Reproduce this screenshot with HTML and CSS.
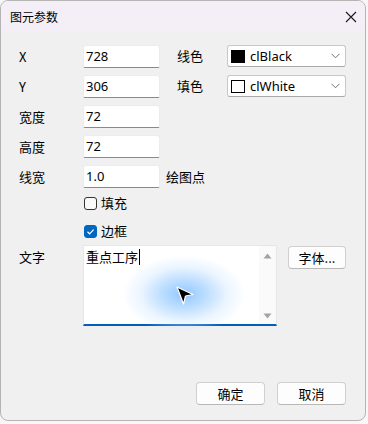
FILE: index.html
```html
<!DOCTYPE html>
<html lang="zh">
<head>
<meta charset="utf-8">
<title>图元参数</title>
<link rel="stylesheet" href="styles.css">
</head>
<body>
<div class="window">
  <div class="titlebar">
    <span class="title">图元参数</span>
    <svg class="close" width="12" height="12" viewBox="0 0 12 12"><path d="M1 1 L11 11 M11 1 L1 11" stroke="#1a1a1a" stroke-width="1.1" fill="none"/></svg>
  </div>
  <div class="content">
    <div class="row">
      <span class="lbl">X</span>
      <div class="input">728</div>
      <span class="lbl2">线色</span>
      <div class="combo">
        <span class="swatch black"></span><span class="ctext">clBlack</span>
        <svg class="chev" width="9" height="6" viewBox="0 0 9 6"><path d="M0.5 0.8 L4.5 4.8 L8.5 0.8" stroke="#707070" stroke-width="1" fill="none"/></svg>
      </div>
    </div>
    <div class="row">
      <span class="lbl">Y</span>
      <div class="input">306</div>
      <span class="lbl2">填色</span>
      <div class="combo">
        <span class="swatch white"></span><span class="ctext">clWhite</span>
        <svg class="chev" width="9" height="6" viewBox="0 0 9 6"><path d="M0.5 0.8 L4.5 4.8 L8.5 0.8" stroke="#707070" stroke-width="1" fill="none"/></svg>
      </div>
    </div>
    <div class="row">
      <span class="lbl">宽度</span>
      <div class="input">72</div>
    </div>
    <div class="row">
      <span class="lbl">高度</span>
      <div class="input">72</div>
    </div>
    <div class="row">
      <span class="lbl">线宽</span>
      <div class="input">1.0</div>
      <span class="unit">绘图点</span>
    </div>
    <div class="check first">
      <span class="box"></span><span class="ctl">填充</span>
    </div>
    <div class="check">
      <span class="box checked"><svg width="13" height="13" viewBox="0 0 13 13"><path d="M3.5 6.8 L5.6 8.8 L9.6 4.6" stroke="#fff" stroke-width="1.2" fill="none"/></svg></span><span class="ctl">边框</span>
    </div>
    <div class="textrow">
      <span class="lbl tl">文字</span>
      <div class="memo">
        <div class="memotext">重点工序<span class="caret"></span></div>
        <div class="scroll">
          <svg width="9" height="6" viewBox="0 0 9 6"><path d="M0.5 5.5 L4.5 0.5 L8.5 5.5 Z" fill="#a3a3a3"/></svg>
          <svg width="9" height="6" viewBox="0 0 9 6"><path d="M0.5 0.5 L4.5 5.5 L8.5 0.5 Z" fill="#a3a3a3"/></svg>
        </div>
      </div>
      <div class="btn font">字体...</div>
    </div>
  </div>
  <div class="footer">
    <div class="btn ok">确定</div>
    <div class="btn ok">取消</div>
  </div>
  <div class="glow"></div>
  <svg class="cursor" width="20" height="22" viewBox="0 0 20 22"><path d="M2 2 L18 9.5 L10.5 11 L8.5 19 Z" fill="#000" stroke="#fff" stroke-width="1.2" stroke-linejoin="round"/></svg>
</div>
</body>
</html>
```
FILE: styles.css
```css
html, body {
  margin: 0;
  padding: 0;
}
body {
  background: #f7f7f7;
  width: 368px;
  height: 424px;
  font-family: "Noto Sans", "Noto Sans CJK SC", sans-serif;
  font-size: 13px;
  color: #000;
}
.window {
  position: relative;
  width: 366px;
  height: 421px;
  box-sizing: border-box;
  border: 1px solid #b4b4b4;
  border-radius: 8px;
  overflow: hidden;
  background: #f0f0f0;
  display: flex;
  flex-direction: column;
}
.titlebar {
  height: 30px;
  background: #f4eff6;
  display: flex;
  align-items: center;
  justify-content: space-between;
  padding: 0 8px 0 9px;
  flex: none;
}
.title {
  font-family: "Noto Sans CJK SC", sans-serif;
  font-size: 12px;
  line-height: 14px;
  margin-top: 1px;
}
.close {
  margin-top: 1px;
}
.content {
  flex: 1;
  padding: 14px 0 0 18px;
}
.row {
  display: flex;
  align-items: center;
  height: 23px;
  margin-bottom: 7px;
}
.lbl {
  width: 64px;
  flex: none;
  font-family: "Noto Sans CJK SC", sans-serif;
  line-height: 16px;
}
.input {
  width: 77px;
  height: 23px;
  box-sizing: border-box;
  background: #fff;
  border: 1px solid #ececec;
  border-bottom: 1px solid #8a8a8a;
  border-radius: 3px 3px 2px 2px;
  padding-left: 2px;
  line-height: 21px;
  font-size: 13px;
}
.lbl2 {
  width: 50px;
  margin-left: 17px;
  flex: none;
  font-family: "Noto Sans CJK SC", sans-serif;
  line-height: 16px;
  align-self: flex-start;
  margin-top: 3px;
}
.combo {
  width: 119px;
  height: 22px;
  box-sizing: border-box;
  background: #fff;
  border: 1px solid #c8c8c8;
  border-bottom-color: #a9a9a9;
  border-radius: 3px;
  display: flex;
  align-items: center;
  padding-left: 3px;
  align-self: flex-start;
}
.swatch {
  width: 14px;
  height: 13px;
  box-sizing: border-box;
  flex: none;
}
.swatch.black {
  background: #000;
}
.swatch.white {
  background: #fff;
  border: 1px solid #000;
}
.ctext {
  margin-left: 5px;
  flex: 1;
  font-size: 13px;
  line-height: 16px;
}
.chev {
  margin-right: 5px;
}
.unit {
  margin-left: 6px;
  font-family: "Noto Sans CJK SC", sans-serif;
  line-height: 16px;
}
.check {
  display: flex;
  align-items: center;
  margin-left: 65px;
  height: 16px;
  margin-bottom: 12px;
}
.check.first {
  margin-top: 2px;
}
.box {
  width: 13px;
  height: 13px;
  box-sizing: border-box;
  border: 1px solid #333;
  border-radius: 3px;
  background: #f9f9f9;
  flex: none;
  display: flex;
}
.box.checked {
  background: #0067c0;
  border-color: #0067c0;
}
.box.checked svg {
  margin: -1px;
}
.ctl {
  margin-left: 4px;
  font-family: "Noto Sans CJK SC", sans-serif;
  line-height: 16px;
}
.textrow {
  display: flex;
  align-items: flex-start;
  margin-top: -6px;
}
.tl {
  margin-top: 4px;
}
.memo {
  width: 194px;
  height: 81px;
  box-sizing: border-box;
  background: #fff;
  border: 1px solid #e6e6e6;
  border-bottom: 2px solid #005fb8;
  display: flex;
}
.memotext {
  flex: 1;
  padding: 3px 0 0 2px;
  font-family: "Noto Sans CJK SC", sans-serif;
  line-height: 16px;
  display: flex;
  align-items: flex-start;
}
.caret {
  width: 1px;
  height: 16px;
  background: #000;
  margin-left: 1px;
}
.scroll {
  width: 17px;
  background: #fafafa;
  display: flex;
  flex-direction: column;
  justify-content: space-between;
  align-items: center;
  padding: 7px 0 5px;
}
.btn {
  box-sizing: border-box;
  height: 23px;
  background: #fdfdfd;
  border: 1px solid #d0d0d0;
  border-bottom-color: #b8b8b8;
  border-radius: 4px;
  display: flex;
  align-items: center;
  justify-content: center;
  font-family: "Noto Sans CJK SC", sans-serif;
  font-size: 13px;
  line-height: 16px;
}
.btn.font {
  width: 58px;
  margin-left: 11px;
  margin-top: 1px;
}
.footer {
  flex: none;
  display: flex;
  justify-content: flex-end;
  gap: 12px;
  padding: 0 19px 15px 0;
}
.btn.ok {
  width: 69px;
}
.glow {
  position: absolute;
  left: 121px;
  top: 254px;
  width: 124px;
  height: 78px;
  background: radial-gradient(closest-side, rgba(140,196,255,0.95) 0%, rgba(165,210,255,0.75) 35%, rgba(205,230,255,0.4) 70%, rgba(255,255,255,0) 100%);
  pointer-events: none;
}
.cursor {
  position: absolute;
  left: 174px;
  top: 284px;
}
```
